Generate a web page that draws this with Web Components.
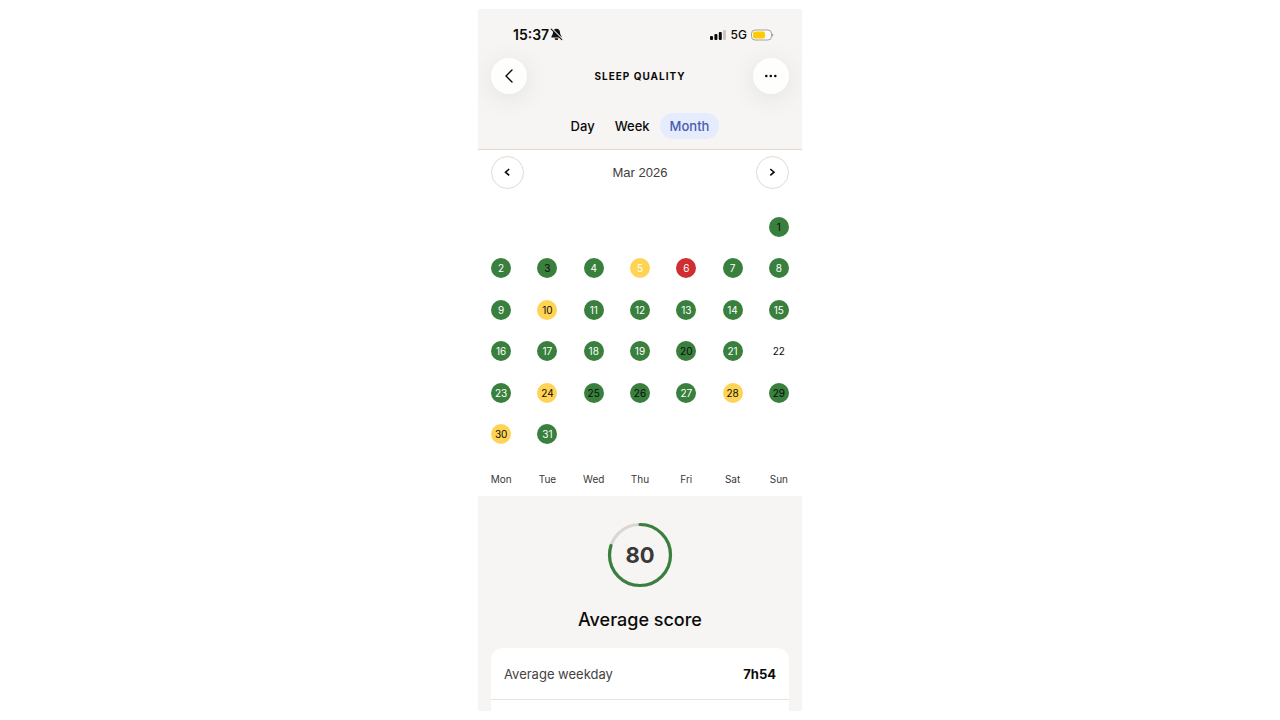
<!DOCTYPE html>
<html lang="en">
<head>
<meta charset="utf-8">
<meta name="viewport" content="width=device-width, initial-scale=1">
<title>Sleep quality</title>
<style>
  body { margin: 0; background: #fff; color: #0b0b0b; font-family: Inter, "Liberation Sans", sans-serif; }
</style>
</head>
<body>
<sleep-app></sleep-app>
<script>
class BaseElement extends HTMLElement {
  constructor() {
    super();
    this.attachShadow({ mode: 'open' }).innerHTML = this.render();
  }
}

customElements.define('status-bar', class extends BaseElement {
  render() {
    return `<style>
      :host { display: flex; align-items: center; justify-content: space-between; height: 49px; padding: 0 28px 0 35px; }
      .group { display: flex; align-items: center; gap: 4px; padding-top: 2px; }
      .time { font-size: 14px; line-height: 18px; font-weight: 600; }
      .net { font-size: 12px; line-height: 18px; font-weight: 500; }
      .left { gap: 1px; }
      svg { display: block; }
    </style>
    <div class="group left">
      <span class="time">15:37</span>
      <svg width="13" height="13" viewBox="0 0 13 13" aria-hidden="true">
        <path d="M6.5 .8C4 .8 3 2.700 3 4.600c0 2.500-1.700 3.200-1.700 4.900h10.400c0-1.700-1.700-2.400-1.700-4.900C10 2.700 9 .8 6.500 .8z" fill="#111"/>
        <path d="M4.600 10.200h3.800a1.900 1.900 0 0 1-3.800 0z" fill="#111"/>
        <path d="M2 .8l10.600 10.400" stroke="#f6f5f3" stroke-width="1.200"/>
        <path d="M1.200 1.200l10.600 10.400" stroke="#111" stroke-width="1.100" stroke-linecap="round"/>
      </svg>
    </div>
    <div class="group">
      <svg width="17" height="12" viewBox="0 0 17 12" aria-hidden="true">
        <rect x="0" y="7" width="3" height="4" rx="1" fill="#0b0b0b"/>
        <rect x="4.400" y="5" width="3" height="6" rx="1" fill="#0b0b0b"/>
        <rect x="8.800" y="3" width="3" height="8" rx="1" fill="#0b0b0b"/>
        <rect x="13" y="1" width="3" height="10" rx="1" fill="#c9c8c7"/>
      </svg>
      <span class="net">5G</span>
      <svg width="23" height="12" viewBox="0 0 23 12" aria-hidden="true">
        <rect x=".5" y="1" width="20" height="10" rx="3.500" fill="#fafaf9" stroke="#a3a19f"/>
        <rect x="2" y="2.500" width="12" height="7" rx="2" fill="#fc0"/>
        <path d="M21.300 4.300c1.300.4 1.300 3 0 3.400z" fill="#8b8988"/>
      </svg>
    </div>`;
  }
});

customElements.define('round-button', class extends BaseElement {
  render() {
    return `<style>
      :host { display: block; }
      button { display: grid; place-items: center; box-sizing: border-box; width: 36px; height: 36px; padding: 0;
        border: 0; border-radius: 50%; background: #fefefd; color: #0b0b0b; box-shadow: 0 4px 24px rgba(70, 60, 50, .1); }
      :host([outlined]) button { width: 33px; height: 33px; border: 1px solid #dedad8; background: #fff; box-shadow: none; }
    </style>
    <button type="button" aria-label="${this.getAttribute('label')}"><slot></slot></button>`;
  }
});

customElements.define('range-tabs', class extends BaseElement {
  render() {
    return `<style>
      :host { display: flex; justify-content: center; }
      button { height: 26px; padding: 0 10px; border: 0; border-radius: 13px; background: none;
        color: #0b0b0b; font: 500 13px/26px Inter, "Liberation Sans", sans-serif; }
      button[aria-selected="true"] { background: #e5ecfd; color: #4a5bb0; }
    </style>
    <button type="button" role="tab" aria-selected="false">Day</button>
    <button type="button" role="tab" aria-selected="false">Week</button>
    <button type="button" role="tab" aria-selected="true">Month</button>`;
  }
  connectedCallback() { this.setAttribute('role', 'tablist'); }
});

customElements.define('app-header', class extends BaseElement {
  render() {
    return `<style>
      :host { display: block; background: #f6f5f3; border-bottom: 1px solid #e0d9d3; padding-bottom: 10px; }
      nav { display: flex; align-items: center; justify-content: space-between; padding: 0 13px; }
      h1 { margin: 0; font-size: 10px; line-height: 16px; font-weight: 700; letter-spacing: 1px; text-transform: uppercase; }
      range-tabs { margin-top: 19px; }
      svg { display: block; }
    </style>
    <status-bar></status-bar>
    <nav>
      <round-button label="Back">
        <svg width="14" height="16" viewBox="0 0 14 16" fill="none" stroke="currentColor" stroke-width="1.400" stroke-linecap="round" stroke-linejoin="round"><path d="M10 2L4 8l6 6"/></svg>
      </round-button>
      <h1>Sleep quality</h1>
      <round-button label="More">
        <svg width="14" height="4" viewBox="0 0 14 4" fill="currentColor"><circle cx="2.300" cy="2" r="1.300"/><circle cx="6.800" cy="2" r="1.300"/><circle cx="11.300" cy="2" r="1.300"/></svg>
      </round-button>
    </nav>
    <range-tabs></range-tabs>`;
  }
});

customElements.define('month-picker', class extends BaseElement {
  render() {
    return `<style>
      :host { display: flex; align-items: center; justify-content: space-between; padding: 6px 13px 17px; }
      h2 { margin: 0; font: 400 13px/20px "Liberation Sans", sans-serif; color: #3f3c3a; }
      svg { display: block; }
    </style>
    <round-button outlined label="Previous month">
      <svg width="9" height="9" viewBox="0 0 9 9" fill="none" stroke="currentColor" stroke-width="1.600"><path d="M6.200 1L2.500 4.200l3.700 3.200"/></svg>
    </round-button>
    <h2>Mar 2026</h2>
    <round-button outlined label="Next month">
      <svg width="9" height="9" viewBox="0 0 9 9" fill="none" stroke="currentColor" stroke-width="1.600"><path d="M2.300 1L6 4.200 2.300 7.400"/></svg>
    </round-button>`;
  }
});

customElements.define('month-calendar', class extends BaseElement {
  render() {
    const fair = [5, 10, 24, 28, 30];
    const dark = [1, 3, 10, 20, 22, 24, 25, 26, 28, 29, 30];
    const cell = n => {
      if (n < 1 || n > 31) return '<td></td>';
      const level = n === 22 ? 'none' : n === 6 ? 'poor' : fair.includes(n) ? 'fair' : 'good';
      return `<td><span class="${level}${dark.includes(n) ? ' dark' : ''}">${n}</span></td>`;
    };
    const rows = [0, 1, 2, 3, 4, 5].map(w =>
      `<tr>${[0, 1, 2, 3, 4, 5, 6].map(d => cell(w * 7 + d - 5)).join('')}</tr>`).join('');
    const days = ['Mon', 'Tue', 'Wed', 'Thu', 'Fri', 'Sat', 'Sun'];
    return `<style>
      :host { display: block; }
      table { width: 100%; height: 290px; table-layout: fixed; border-collapse: collapse; }
      td, th { padding: 0; text-align: center; vertical-align: middle; }
      tfoot tr { height: 41px; }
      th { padding-top: 6px; font-size: 10px; line-height: 14px; font-weight: 400; color: #3a3836; }
      span { display: block; width: 20px; height: 20px; margin: 0 auto; border-radius: 50%;
        font-size: 10px; line-height: 20px; color: #fff; }
      .good { background: #397f3d; }
      .fair { background: #ffd454; }
      .poor { background: #cf2f31; }
      .dark { color: #0b0b0b; }
    </style>
    <table aria-label="Sleep quality, March 2026">
      <tbody>${rows}</tbody>
      <tfoot><tr>${days.map(d => `<th scope="col">${d}</th>`).join('')}</tr></tfoot>
    </table>`;
  }
});

customElements.define('score-ring', class extends BaseElement {
  render() {
    return `<style>
      :host { display: grid; place-items: center; }
      svg, b { grid-area: 1 / 1; }
      b { font-size: 22px; line-height: 30px; font-weight: 700; color: #3b3835; }
    </style>
    <svg width="66" height="66" viewBox="0 0 66 66" fill="none" stroke-width="3.200" aria-hidden="true">
      <circle cx="33" cy="33" r="30.500" stroke="#dad7d3"/>
      <circle cx="33" cy="33" r="30.500" stroke="#397f3d" stroke-linecap="round" pathLength="100" stroke-dasharray="80 100" transform="rotate(-90 33 33)"/>
    </svg>
    <b><slot></slot></b>`;
  }
});

customElements.define('stat-row', class extends BaseElement {
  render() {
    return `<style>
      :host { display: flex; align-items: center; justify-content: space-between; height: 51px; padding: 0 13px;
        border-bottom: 1px solid #e6e4e2; font-size: 13px; line-height: 20px; color: #45423f; }
      b { font-weight: 700; color: #0b0b0b; }
    </style>
    <slot></slot><b><slot name="value"></slot></b>`;
  }
});

customElements.define('sleep-summary', class extends BaseElement {
  render() {
    return `<style>
      :host { display: block; padding: 26px 13px 0; background: #f6f5f3; }
      h2 { margin: 18px 0 14px; font-size: 18px; line-height: 28px; font-weight: 500; text-align: center; }
      section { min-height: 140px; border-radius: 12px; background: #fff; }
    </style>
    <score-ring>80</score-ring>
    <h2>Average score</h2>
    <section><stat-row>Average weekday<span slot="value">7h54</span></stat-row></section>`;
  }
});

customElements.define('sleep-app', class extends BaseElement {
  render() {
    return `<style>
      :host { display: flex; justify-content: center; padding: 9px 0; }
      main { width: 100%; max-width: 324px; height: calc(100vh - 18px); overflow: hidden; background: #fff; }
    </style>
    <main>
      <app-header></app-header>
      <month-picker></month-picker>
      <month-calendar></month-calendar>
      <sleep-summary></sleep-summary>
    </main>`;
  }
});
</script>
</body>
</html>
